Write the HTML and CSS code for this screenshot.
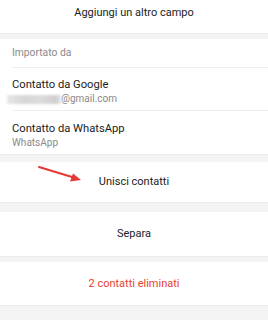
FILE: index.html
```html
<!DOCTYPE html>
<html>
<head>
<meta charset="utf-8">
<link rel="stylesheet" href="styles.css">
</head>
<body>
<div class="page">
  <div class="block top"><span class="action">Aggiungi un altro campo</span></div>
  <div class="gap g6"></div>
  <div class="block list">
    <div class="header">Importato da</div>
    <div class="item">
      <div class="title">Contatto da Google</div>
      <div class="sub"><span class="blur"></span>@gmail.com</div>
    </div>
    <div class="item last">
      <div class="title">Contatto da WhatsApp</div>
      <div class="sub">WhatsApp</div>
    </div>
  </div>
  <div class="gap g8"></div>
  <div class="block btn merge">
    <span class="action">Unisci contatti</span>
    <svg class="arrow" width="50" height="24" viewBox="0 0 50 24">
      <line x1="2" y1="2" x2="40" y2="13.5" stroke="#e53935" stroke-width="2" stroke-linecap="round"/>
      <polygon points="44,15 33,16.5 36,8.5" fill="#e53935"/>
    </svg>
  </div>
  <div class="gap g10"></div>
  <div class="block btn sep"><span class="action">Separa</span></div>
  <div class="gap g6"></div>
  <div class="block btn del"><span class="action red">2 contatti eliminati</span></div>
  <div class="gap rest"></div>
</div>
</body>
</html>
```
FILE: styles.css
```css
html, body {
  margin: 0;
  padding: 0;
  background: #f4f4f4;
}
.page {
  width: 268px;
  height: 320px;
  overflow: hidden;
  font-family: Roboto, "Noto Sans", sans-serif;
  display: flex;
  flex-direction: column;
}
.block {
  background: #ffffff;
}
.gap {
  background: #f4f4f4;
  border-top: 1px solid #ececec;
  box-sizing: border-box;
  flex: none;
}
.g6 { height: 6px; }
.g8 { height: 8px; }
.g10 { height: 10px; }
.rest { flex: 1; }
.top {
  height: 33px;
  flex: none;
  display: flex;
  justify-content: center;
  padding-top: 6px;
  box-sizing: border-box;
}
.action {
  font-size: 11px;
  color: #1c1c1c;
  line-height: 14px;
}
.red { color: #e8412c; }
.list {
  padding-left: 12px;
  flex: none;
}
.header {
  height: 29px;
  line-height: 28px;
  font-size: 10.3px;
  color: #8a8a8a;
  border-bottom: 1px solid #eeeeee;
  box-sizing: border-box;
}
.item {
  height: 43px;
  border-bottom: 1px solid #eeeeee;
  box-sizing: border-box;
  padding-top: 10px;
}
.item.last {
  height: 43px;
  padding-top: 11px;
  border-bottom: none;
}
.title {
  font-size: 11.2px;
  color: #1c1c1c;
  line-height: 14px;
}
.sub {
  font-size: 10px;
  color: #8a8a8a;
  line-height: 14px;
  display: flex;
  align-items: center;
}
.blur {
  display: inline-block;
  width: 54px;
  height: 9px;
  margin-left: -5px;
  background: linear-gradient(90deg, #e8e8e8, #d6d6d6 30%, #dcdcdc 60%, #cfcfcf 90%, #e6e6e6);
  filter: blur(0.8px);
}
.btn {
  display: flex;
  justify-content: center;
  align-items: center;
  position: relative;
  flex: none;
}
.merge { height: 40px; }
.sep { height: 44px; }
.del { height: 43px; }
.arrow {
  position: absolute;
  left: 37px;
  top: 3px;
}
```
